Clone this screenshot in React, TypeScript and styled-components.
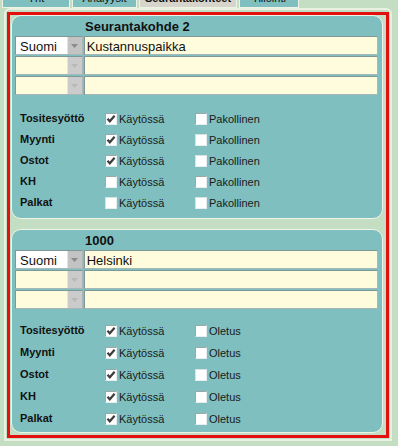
import React, { ReactElement } from "react";
import styled, { createGlobalStyle } from "styled-components";

const GlobalStyle = createGlobalStyle`
    body {
        margin: 0;
        background: #c4dec4;
        font-family: "Liberation Sans", Arial, sans-serif;
        color: #111;
    }
`;

const TabStrip = styled.div`
    display: flex;
    align-items: flex-end;
    gap: 2px;
    height: 8px;
    padding-left: 2px;
    overflow: hidden;
`;

const Tab = styled.div<{ $w: number; $active?: boolean }>`
    flex: 0 0 auto;
    box-sizing: border-box;
    width: ${(p) => p.$w}px;
    height: 20px;
    padding-top: 3px;
    line-height: 14px;
    font-size: 11px;
    font-weight: ${(p) => (p.$active ? "bold" : "normal")};
    text-align: center;
    background: ${(p) => (p.$active ? "#d7d4cc" : "#7fbfbf")};
    border: 1px solid #edf2e4;
    border-top: none;
`;

const Frame = styled.div`
    box-sizing: border-box;
    width: 388px;
    margin-left: 4px;
    padding: 2px 1px 1px 1px;
    border: 2px solid #e9f0df;
    border-radius: 6px 6px 0 0;
`;

const RedBox = styled.div`
    display: flex;
    flex-direction: column;
    gap: 10px;
    padding: 0 3px 2px 1px;
    border: 3px solid #e3100f;
`;

const Card = styled.div<{ $padBottom: number }>`
    padding: 3px 4px ${(p) => p.$padBottom}px 3px;
    background: #7fbfbf;
    border: 1px solid #eef4e6;
    border-radius: 10px;
`;

const Title = styled.div`
    padding-left: 70px;
    font-size: 13px;
    font-weight: bold;
    line-height: 15px;
    margin-bottom: 2px;
`;

const InputRow = styled.div`
    display: flex;
    gap: 1px;
    margin-bottom: 1px;
`;

const Select = styled.div<{ $empty?: boolean }>`
    display: flex;
    box-sizing: border-box;
    width: 68px;
    height: 19px;
    background: ${(p) => (p.$empty ? "#fffcdd" : "#ffffff")};
    border: 1px solid #a5b7b7;
    border-top-color: #7e9898;
    border-left-color: #7e9898;
`;

const SelectText = styled.span`
    flex: 1;
    padding: 2px 0 0 4px;
    font-size: 13px;
    line-height: 15px;
`;

const SelectArrow = styled.span<{ $empty?: boolean }>`
    display: flex;
    align-items: center;
    justify-content: center;
    width: 14px;
    background: ${(p) => (p.$empty ? "#cbcbcb" : "#c3c3c3")};
    border-left: 1px solid #e4e4e4;
`;

const TextInput = styled.div`
    box-sizing: border-box;
    width: 296px;
    height: 19px;
    padding: 2px 0 0 2px;
    font-size: 13px;
    line-height: 15px;
    background: #fffcdd;
    border: 1px solid #a5b7b7;
    border-top-color: #7e9898;
    border-left-color: #7e9898;
`;

const CheckGrid = styled.div<{ $top: number; $rowH: number }>`
    display: grid;
    grid-template-columns: 85px 90px auto;
    grid-auto-rows: ${(p) => p.$rowH}px;
    align-items: center;
    margin-top: ${(p) => p.$top}px;
    padding-left: 5px;
`;

const RowLabel = styled.span`
    font-size: 11px;
    font-weight: bold;
    margin-top: -2px;
`;

const CheckLabel = styled.span`
    display: flex;
    align-items: center;
    gap: 2px;
    font-size: 11px;
    color: #1a1a1a;
`;

const Box = styled.span<{ $faded?: boolean }>`
    display: flex;
    box-sizing: border-box;
    width: 12px;
    height: 12px;
    background: #ffffff;
    border: 1px solid ${(p) => (p.$faded ? "#d8e2e2" : "#9aa8a8")};
    border-bottom-color: #e8eeee;
    border-right-color: #e8eeee;
`;

const Arrow = ({ faint }: { faint?: boolean }): ReactElement => (
    <svg width="7" height="4" viewBox="0 0 7 4">
        <path d="M0 0 L7 0 L3.5 4 Z" fill={faint ? "#b8b8b8" : "#8a8a8a"} />
    </svg>
);

const Check = ({ checked, faded, text }: { checked: boolean; faded?: boolean; text: string }): ReactElement => (
    <CheckLabel>
        <Box $faded={faded}>
            {checked && (
                <svg width="10" height="10" viewBox="0 0 10 10">
                    <path d="M1.5 4.8 L3.8 7.3 L8.6 1.8" fill="none" stroke="#3c3c3c" strokeWidth="2.2" />
                </svg>
            )}
        </Box>
        {text}
    </CheckLabel>
);

interface Row {
    label: string;
    used: boolean;
    extra: boolean;
    fadeUsed?: boolean;
    fadeExtra?: boolean;
}

interface Block {
    title: string;
    value: string;
    extraText: string;
    rowH: number;
    gridTop: number;
    padBottom: number;
    rows: Row[];
}

const blocks: Block[] = [
    {
        title: "Seurantakohde 2",
        value: "Kustannuspaikka",
        extraText: "Pakollinen",
        rowH: 21,
        gridTop: 13,
        padBottom: 5,
        rows: [
            { label: "Tositesyöttö", used: true, extra: false },
            { label: "Myynti", used: true, extra: false, fadeExtra: true },
            { label: "Ostot", used: true, extra: false, fadeExtra: true },
            { label: "KH", used: false, extra: false },
            { label: "Palkat", used: false, extra: false, fadeUsed: true, fadeExtra: true }
        ]
    },
    {
        title: "1000",
        value: "Helsinki",
        extraText: "Oletus",
        rowH: 22,
        gridTop: 11,
        padBottom: 2,
        rows: [
            { label: "Tositesyöttö", used: true, extra: false },
            { label: "Myynti", used: true, extra: false },
            { label: "Ostot", used: true, extra: false, fadeExtra: true },
            { label: "KH", used: true, extra: false },
            { label: "Palkat", used: true, extra: false }
        ]
    }
];

const BlockCard = ({ block }: { block: Block }): ReactElement => (
    <Card $padBottom={block.padBottom}>
        <Title>{block.title}</Title>
        <InputRow>
            <Select>
                <SelectText>Suomi</SelectText>
                <SelectArrow>
                    <Arrow />
                </SelectArrow>
            </Select>
            <TextInput>{block.value}</TextInput>
        </InputRow>
        {[0, 1].map((i) => (
            <InputRow key={i}>
                <Select $empty>
                    <SelectText />
                    <SelectArrow $empty>
                        <Arrow faint />
                    </SelectArrow>
                </Select>
                <TextInput />
            </InputRow>
        ))}
        <CheckGrid $top={block.gridTop} $rowH={block.rowH}>
            {block.rows.map((r) => (
                <React.Fragment key={r.label}>
                    <RowLabel>{r.label}</RowLabel>
                    <Check checked={r.used} faded={r.fadeUsed} text="Käytössä" />
                    <Check checked={r.extra} faded={r.fadeExtra} text={block.extraText} />
                </React.Fragment>
            ))}
        </CheckGrid>
    </Card>
);

const App = (): ReactElement => (
    <>
        <GlobalStyle />
        <TabStrip>
            <Tab $w={68}>Yht</Tab>
            <Tab $w={65}>Analyysit</Tab>
            <Tab $w={98} $active>
                Seurantakohteet
            </Tab>
            <Tab $w={60}>Tiliöinti</Tab>
        </TabStrip>
        <Frame>
            <RedBox>
                {blocks.map((b) => (
                    <BlockCard key={b.title} block={b} />
                ))}
            </RedBox>
        </Frame>
    </>
);

export default App;
